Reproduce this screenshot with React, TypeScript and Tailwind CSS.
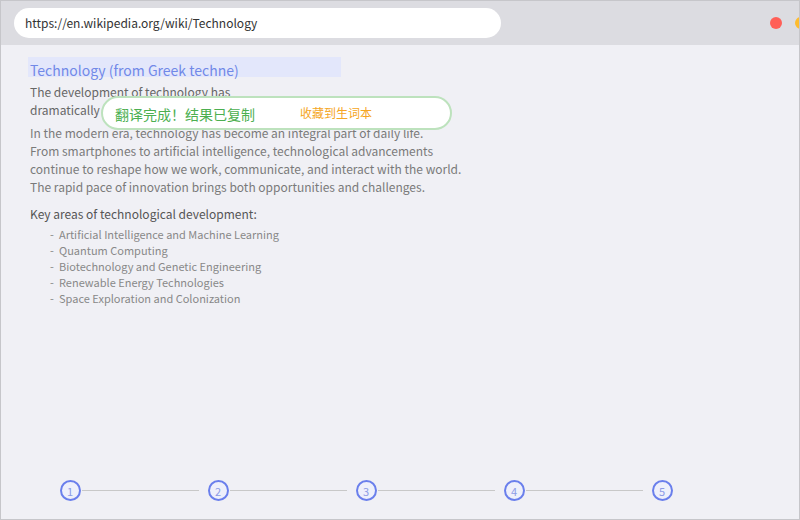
const FONT = { fontFamily: '"Noto Sans CJK SC", "Noto Sans", sans-serif' }

const KEY_AREAS = [
  'Artificial Intelligence and Machine Learning',
  'Quantum Computing',
  'Biotechnology and Genetic Engineering',
  'Renewable Energy Technologies',
  'Space Exploration and Colonization',
]

const STEPS = [1, 2, 3, 4, 5]

function TitleBar() {
  return (
    <div className="flex h-[44px] flex-shrink-0 items-center bg-[#dcdce1]">
      <div className="ml-[13px] flex h-[30px] w-[487px] flex-shrink-0 items-center rounded-full bg-white pl-[11px] text-[12px] text-[#333]">
        https://en.wikipedia.org/wiki/Technology
      </div>
      <div className="ml-[269px] flex flex-shrink-0 items-center gap-[13px]">
        <span className="h-[12px] w-[12px] rounded-full bg-[#ff5f57]" />
        <span className="h-[12px] w-[12px] rounded-full bg-[#febc2e]" />
        <span className="h-[12px] w-[12px] rounded-full bg-[#28c840]" />
      </div>
    </div>
  )
}

function Toast() {
  return (
    <div className="absolute left-[100px] top-[95px] flex h-[34px] w-[351px] items-center rounded-full border-2 border-[#bde2bd] bg-white pl-[12px]">
      <span className="pt-[2px] text-[14px] leading-none text-[#4caf50]">翻译完成！结果已复制</span>
      <span className="ml-[45px] text-[12px] leading-none text-[#f5a623]">收藏到生词本</span>
    </div>
  )
}

function Stepper() {
  return (
    <div className="mt-auto flex items-center pb-[18px] pl-[59px]">
      {STEPS.map((n, i) => (
        <div key={n} className="flex items-center">
          <div className="flex h-[21px] w-[21px] items-center justify-center rounded-full border-2 border-[#6a7fec] bg-[#eef0fb] pr-px pt-[2px] text-[11px] leading-none text-[#8c9be6]">
            {n}
          </div>
          {i < STEPS.length - 1 && <div className="ml-px mr-[9px] h-px w-[117px] bg-[#c8c8c8]" />}
        </div>
      ))}
    </div>
  )
}

export default function App() {
  return (
    <div
      className="relative flex h-[520px] w-[800px] flex-col overflow-hidden border border-[#c6c6ca] bg-[#f0f0f5]"
      style={FONT}
    >
      <TitleBar />
      <div className="pl-[27px] pt-[12px]">
        <div className="h-[20px] w-[313px] bg-[#e3e7fb] pl-[2px] pt-[3px] text-[14px] leading-[20px] text-[#7189e8]">
          Technology (from Greek techne)
        </div>
        <p className="mt-[6px] pl-[2px] text-[12px] leading-[18px] text-[#666]">
          The development of technology has
          <br />
          dramatically changed human society.
        </p>
        <p className="mt-[5px] pl-[2px] text-[12px] leading-[18px] text-[#7a7a7a]">
          In the modern era, technology has become an integral part of daily life.
          <br />
          From smartphones to artificial intelligence, technological advancements
          <br />
          continue to reshape how we work, communicate, and interact with the world.
          <br />
          The rapid pace of innovation brings both opportunities and challenges.
        </p>
        <p className="mt-[9px] pl-[2px] text-[12px] leading-[18px] text-[#555]">
          Key areas of technological development:
        </p>
        <ul className="mt-[3px] pl-[22px] text-[11px] leading-[16px] text-[#888]">
          {KEY_AREAS.map((a) => (
            <li key={a} className="flex">
              <span className="w-[9px]">-</span>
              <span>{a}</span>
            </li>
          ))}
        </ul>
      </div>
      <Toast />
      <Stepper />
    </div>
  )
}
